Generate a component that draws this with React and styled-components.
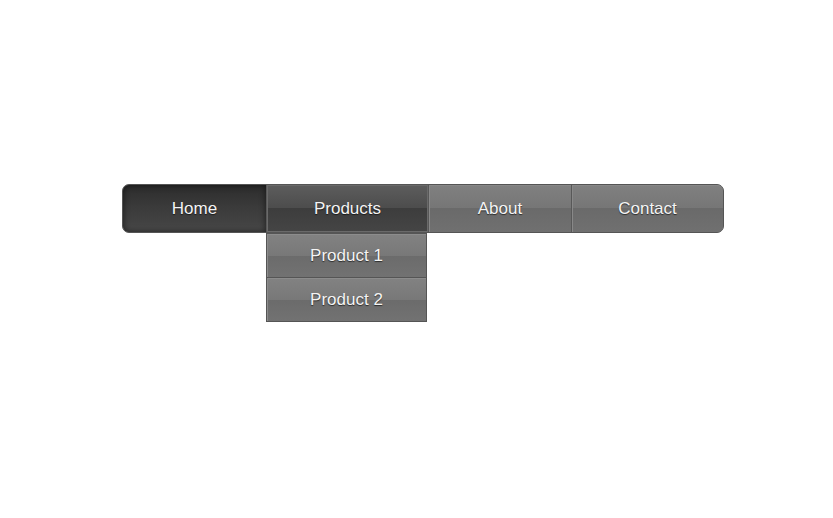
import { styled, createGlobalStyle, css } from "styled-components";

const GlobalStyle = createGlobalStyle`
    body {
        margin: 0;
        background: #ffffff;
        font-family: 'Liberation Sans', Arial, sans-serif;
    }
`;

const Page = styled.div`
    padding: 184px 0 0 122px;
    min-height: 518px;
    box-sizing: border-box;
`;

const Bar = styled.ul`
    display: flex;
    width: 602px;
    height: 49px;
    margin: 0;
    padding: 0;
    list-style: none;
    box-sizing: border-box;
    border: 1px solid #555;
    border-radius: 7px;
    background: #6c6c6c;
`;

const looks = {
    dark: css`
        background: linear-gradient(#2c2c2c, #3a3a3a 45%, #424242 80%, #4a4a4a);
        box-shadow: inset 0 0 6px rgba(0, 0, 0, 0.6);
    `,
    active: css`
        background: linear-gradient(#5d5d5d, #4c4c4c 50%, #3d3d3d 50%, #454545);
        box-shadow: inset 0 0 0 1px #6a6a6a;
    `,
    normal: css`
        background: linear-gradient(#808080, #767676 50%, #6a6a6a 50%, #707070);
        box-shadow: inset 1px 1px 0 #888;
    `,
};

const Item = styled.li`
    position: relative;
    flex: 0 0 ${(p) => p.$w}px;
    display: flex;
    align-items: center;
    justify-content: center;
    box-sizing: border-box;
    color: #f4f4f4;
    font-size: 17px;
    text-shadow: 0 1px 1px rgba(0, 0, 0, 0.6);
    cursor: pointer;
    ${(p) => looks[p.$look]}
    & + & {
        border-left: 1px solid #585858;
    }
    &:first-child {
        border-radius: 6px 0 0 6px;
    }
    &:last-child {
        border-radius: 0 6px 6px 0;
    }
`;

const Dropdown = styled.ul`
    position: absolute;
    top: 48px;
    left: -1px;
    width: 161px;
    margin: 0;
    padding: 0;
    list-style: none;
    box-sizing: border-box;
    border: 1px solid #555;
    background: #666;
`;

const SubItem = styled.li`
    height: 43px;
    display: flex;
    align-items: center;
    justify-content: center;
    font-size: 17px;
    color: #f4f4f4;
    text-shadow: 0 1px 1px rgba(0, 0, 0, 0.6);
    background: linear-gradient(#828282, #787878 50%, #6b6b6b 50%, #727272);
    box-shadow: inset 1px 1px 0 #8c8c8c;
    & + & {
        border-top: 1px solid #555;
    }
`;

const items = [
    { label: "Home", w: 143, look: "dark" },
    { label: "Products", w: 162, look: "active", sub: ["Product 1", "Product 2"] },
    { label: "About", w: 143, look: "normal" },
    { label: "Contact", w: 152, look: "normal" },
];

const App = () => {
    return (
        <Page>
            <GlobalStyle />
            <Bar>
                {items.map((it) => (
                    <Item key={it.label} $w={it.w} $look={it.look}>
                        {it.label}
                        {it.sub && (
                            <Dropdown>
                                {it.sub.map((s) => (
                                    <SubItem key={s}>{s}</SubItem>
                                ))}
                            </Dropdown>
                        )}
                    </Item>
                ))}
            </Bar>
        </Page>
    );
};

export default App;
